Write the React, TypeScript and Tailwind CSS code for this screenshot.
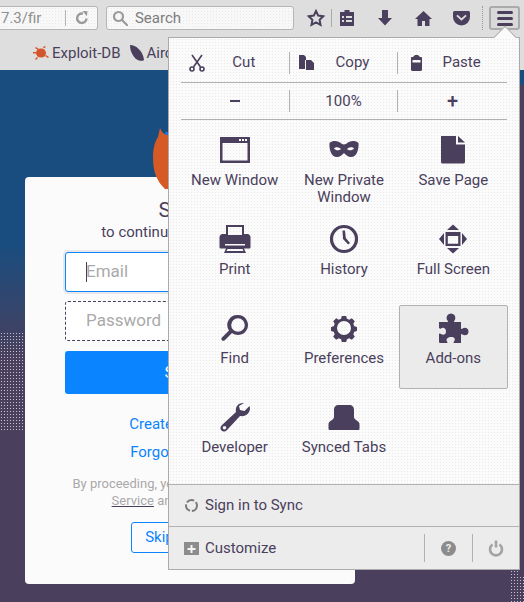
import React from "react";

const INK = "#4a3f5c";

function Svg({ w = 32, h = 32, children, className = "" }: { w?: number; h?: number; children: React.ReactNode; className?: string }) {
  return (
    <svg width={w} height={h} viewBox={`0 0 ${w} ${h}`} className={`block shrink-0 ${className}`} fill={INK}>
      {children}
    </svg>
  );
}

const icons: Record<string, React.ReactNode> = {
  window: (
    <Svg>
      <path fillRule="evenodd" d="M1 3h30v26H1zM3.500 9v17.500h25V9z" />
      <path fill="#fbfbfb" d="M20 5h2v2h-2zM23 5h2v2h-2zM26 5h2v2h-2z" />
    </Svg>
  ),
  mask: (
    <Svg>
      <path fillRule="evenodd" d="M1.500 9c3-2.500 6.500-2.500 9.500-1 2 1 3.500 2.500 5 2.500s3-1.500 5-2.500c3-1.500 6.500-1.500 9.500 1 .5 6-1.500 14-7.500 14-3 0-5-2-7-4-2 2-4 4-7 4-6 0-8-8-7.500-14zM6 14.500c1.500 2 5 2.500 7 .5-2-2-5.500-2.500-7-.5zm20 0c-1.500-2-5-1.500-7 .5 2 2 5.500 1.500 7-.5z" />
    </Svg>
  ),
  save: (
    <Svg>
      <path d="M4 2h15v8.500h9V28a1.500 1.500 0 0 1-1.500 1.500h-21A1.500 1.500 0 0 1 4 28z" />
      <path d="M21 2l7 6.500h-7z" />
    </Svg>
  ),
  print: (
    <Svg>
      <path fillRule="evenodd" d="M7 2h18v9h3.500c1.500 0 3 1.500 3 3v10c0 1-.5 1.500-1.500 1.500h-5L27 30H5l2-4.500H2c-1 0-1.500-.5-1.500-1.500V14c0-1.500 1.500-3 3-3H7zM9 4v8h14V4zM8.500 26 7.500 28h17l-1-2zM6 21v1.500h20V21z" />
    </Svg>
  ),
  history: (
    <Svg>
      <circle cx="16" cy="16" r="12.500" fill="none" stroke={INK} strokeWidth="3.200" />
      <path d="M14.500 7.500h2.500l.8 7.500 4.200 5-1.800 1.500-5.200-5.500z" />
    </Svg>
  ),
  fullscreen: (
    <Svg>
      <path d="M16 1.500l6 5.500H10zM16 30.500l-6-5.500h12zM2 16l5-6v12zM30 16l-5 6V10z" />
      <path fillRule="evenodd" d="M8.500 9h15v14h-15zM10.800 13v7.700h10.400V13z" />
    </Svg>
  ),
  find: (
    <Svg>
      <path fillRule="evenodd" d="M19 3a10 10 0 1 1-6 18l-7.500 7.500c-2 1-3.500-.5-3-2.500L10 18.500A10 10 0 0 1 19 3zm0 3.200a6.800 6.800 0 1 0 0 13.600 6.800 6.800 0 0 0 0-13.600z" />
    </Svg>
  ),
  gear: (
    <Svg>
      <path fillRule="evenodd" d="M13.800 4h4.400l.7 2.800 2.400 1 2.500-1.500 3 3-1.500 2.500 1 2.400 2.700.7v4.200l-2.700.7-1 2.400 1.500 2.500-3 3-2.500-1.500-2.400 1-.7 2.800h-4.400l-.7-2.800-2.400-1-2.500 1.500-3-3 1.500-2.500-1-2.400-2.700-.7v-4.200l2.700-.7 1-2.400-1.500-2.500 3-3 2.500 1.500 2.400-1zM16 9a7 7 0 1 0 0 14 7 7 0 0 0 0-14z" />
    </Svg>
  ),
  puzzle: (
    <Svg>
      <path d="M2 10h8c1 0 1.500-.5.500-1.500C9 7 9 2 14 1.500c5 .5 5 5.500 3.500 7-1 1-.5 1.500.5 1.500h6v6c0 1 .5 1.500 1.500.5 2-1.500 6-1 6 3s-4 4.500-6 3c-1-1-1.500-.5-1.500.5v8h-6.500c-1 0-1.500-.5-.5-1.500 1.500-2 1-4.500-2.500-4.500S8.500 27 10 29.500c1 1 .5 1.500-.5 1.500H3.500C2.500 31 2 30.500 2 29.500v-7c0-1 1-1.500 2-.5 2 1.500 5 1 5-2.500S6 15 4 16.500c-1 .5-2 0-2-1z" />
    </Svg>
  ),
  wrench: (
    <Svg>
      <path fillRule="evenodd" d="M24 2c-5 0-8 4-7 9L3 24c-2 2-2 4-.5 5.500S6 31 8 29l13-14c6 1 10-3 10-8l-.5-2-5 5-4.500-1-1-4 5-3zM5.500 25a1.800 1.800 0 1 1 0 3.600 1.800 1.800 0 0 1 0-3.600z" />
    </Svg>
  ),
  tabs: (
    <Svg>
      <path d="M11 4h10c3.500 0 5 2 5 5v7c0 3 5.500 4 5.500 7v4.500c0 1-.5 1.500-1.500 1.500H2c-1 0-1.500-.5-1.500-1.500V23c0-3 5.500-4 5.500-7V9c0-3 1.500-5 5-5z" />
    </Svg>
  ),
};

function Tile({ icon, label, active }: { icon: string; label: string; active?: boolean }) {
  return (
    <div className={`flex h-[84px] flex-col items-center rounded-[2px] border pt-[6px] text-center leading-[17px] ${active ? "border-[#b1b1b1] bg-[#ebebeb]" : "border-transparent"}`}>
      {icons[icon]}
      <span className="mt-[6px] max-w-[90px]">{label}</span>
    </div>
  );
}

const tiles = [
  ["window", "New Window"],
  ["mask", "New Private Window"],
  ["save", "Save Page"],
  ["print", "Print"],
  ["history", "History"],
  ["fullscreen", "Full Screen"],
  ["find", "Find"],
  ["gear", "Preferences"],
  ["puzzle", "Add-ons"],
  ["wrench", "Developer"],
  ["tabs", "Synced Tabs"],
];

const texture = "bg-[radial-gradient(#e9e9e9_0.7px,transparent_0.8px)] bg-[length:3px_3px]";

function EditCell({ icon, label, last }: { icon: React.ReactNode; label: string; last?: boolean }) {
  return (
    <div className={`flex h-[22px] items-center ${last ? "" : "border-r border-[#b1b1b1]"}`}>
      <span className="flex w-[24px] justify-end">{icon}</span>
      <span className="flex-1 pr-[6px] text-center">{label}</span>
    </div>
  );
}

function Toolbar() {
  return (
    <div className="flex h-[36px] items-center bg-[#dedede] pl-0 pr-[4px]">
      <div className={`flex h-[24px] w-[99px] items-center justify-end rounded-r-[3px] border border-l-0 border-[#b5b5b5] bg-[#f8f8f8] ${texture}`}>
        <span className="w-[41px] text-[15px] text-[#8f8f8f] overflow-hidden whitespace-nowrap">7.3/fir</span>
        <span className="mr-[8px] ml-[23px] flex h-[16px] w-[24px] items-center justify-end border-l border-[#b5b5b5] pl-[8px]">
          <svg width="14" height="14" viewBox="0 0 14 14" fill="none" stroke="#9a9a9a" strokeWidth="2.400">
            <path d="M11.500 7.500A4.700 4.700 0 1 1 8 2.700" />
            <path d="M7.500 0l5 .3-.6 5z" fill="#9a9a9a" stroke="none" />
          </svg>
        </span>
      </div>
      <div className={`ml-[8px] flex h-[24px] w-[190px] items-center rounded-[3px] border border-[#b5b5b5] bg-[#f8f8f8] pl-[5px] text-[15px] text-[#7d7d7d] ${texture}`}>
        <svg width="16" height="16" viewBox="0 0 16 16" fill="none" stroke="#9a9a9a" strokeWidth="2.200">
          <circle cx="6.500" cy="6.500" r="4.500" />
          <path d="M10 10l5 5" strokeLinecap="round" />
        </svg>
        <span className="ml-[7px]">Search</span>
      </div>
      <div className="ml-[13px] flex items-center">
        <svg width="18" height="18" viewBox="0 0 18 18" fill="none" stroke={INK} strokeWidth="2">
          <path d="M9 2l2.200 4.600 5 .7-3.600 3.500.9 5L9 13.400 4.500 15.800l.9-5L1.800 7.300l5-.7z" />
        </svg>
        <span className="ml-[6px] h-[18px] w-px bg-[#aaaaaa]" />
        <svg width="16" height="16" viewBox="0 0 16 16" fill={INK} className="ml-[7px]" fillRule="evenodd">
          <path d="M5.500 2V0h5v2H15v14H1V2zM3 6v2h2V6zm4 0v2h6V6zM3 10v2h2v-2zm4 0v2h6v-2z" />
        </svg>
        <svg width="16" height="16" viewBox="0 0 16 16" fill={INK} className="ml-[22px]">
          <path d="M5 0h6v8h4l-7 7.500L1 8h4z" />
        </svg>
        <svg width="17" height="17" viewBox="0 0 17 17" fill={INK} className="ml-[22px]">
          <path d="M8.500 1L17 9h-2.500v7H10v-5H7v5H2.500V9H0z" />
        </svg>
        <svg width="17" height="16" viewBox="0 0 17 16" fill={INK} className="ml-[21px]" fillRule="evenodd">
          <path d="M1.500 1h14A1.500 1.500 0 0 1 17 2.500V7a8.500 8.500 0 0 1-17 0V2.500A1.500 1.500 0 0 1 1.500 1zm1.800 5L8.500 10.800 13.700 6l-1.300-1.300-3.900 3.500-3.900-3.500z" />
        </svg>
        <span className="ml-[12px] h-[24px] w-0 border-l border-dotted border-[#9a9a9a]" />
        <div className="ml-[6px] flex h-[24px] w-[31px] flex-col items-center justify-center gap-[3px] rounded-[3px] border-2 border-[#ababab] bg-[#d9d9d9]">
          <span className="h-[3px] w-[16px] rounded-full bg-[#4a3f5c]" />
          <span className="h-[3px] w-[16px] rounded-full bg-[#4a3f5c]" />
          <span className="h-[3px] w-[16px] rounded-full bg-[#4a3f5c]" />
        </div>
      </div>
    </div>
  );
}

function Bookmarks() {
  return (
    <div className="flex h-[34px] items-center bg-[#dedede] pl-[33px] text-[15px] text-[#4a3f5c]">
      <svg width="16" height="14" viewBox="0 0 16 14" fill="#d4552a">
        <ellipse cx="8" cy="7" rx="5" ry="4.500" />
        <path d="M0 6h3v1.500H0zM13 9l3 2-1 1-3-2zM3 1l3 2-1 1-3-2zM10 1l2-1 .8 1-2 1.500zM4 11l-2 2 1 1 2-2z" />
      </svg>
      <span className="ml-[3px]">Exploit-DB</span>
      <svg width="16" height="18" viewBox="0 0 16 18" fill={INK} className="ml-[9px]">
        <path d="M1 1c6 0 13 6 14 15-1 1-3 1-5 .5C5 15 1 8 1 1z" />
      </svg>
      <span className="ml-[1px]">Aircrack-ng</span>
    </div>
  );
}

function Page() {
  return (
    <div className="relative flex-1 overflow-hidden bg-[linear-gradient(#1a4d7f_0px,#1a4d7f_175px,#4a3f5c_290px,#4a3f5c_100%)]">
      <div className="absolute left-0 top-[262px] h-[98px] w-[25px] bg-[radial-gradient(#c9c5cf_0.8px,transparent_0.9px)] bg-[length:3px_3px]" />
      <div className="absolute right-0 bottom-0 h-[32px] w-[14px] bg-[radial-gradient(#c9c5cf_0.8px,transparent_0.9px)] bg-[length:3px_3px]" />
      <div className="absolute right-0 top-[15px] h-[490px] w-[6px] bg-[#4a3f5c]" />
      <svg width="40" height="62" viewBox="0 0 40 62" className="absolute left-[153px] top-[57px] z-10">
        <path d="M7 1c1 3 3 5 6 7 8-2 20 0 27 8v46H12C4 54 0 46 0 30 0 22 2 14 5 10z" fill="#d55a26" />
        <path d="M12 5h4v3h-4z" fill="#1c74d6" />
      </svg>
      <div className="ml-[25px] mt-[107px] flex h-[407px] w-[330px] flex-col items-center rounded-[4px] bg-[#fbfbfc] pt-[21px] text-[#4a3f5c]">
        <h1 className="text-[21px] leading-[24px]">Sign in</h1>
        <p className="text-[15px] leading-[20px]">to continue to Firefox Sync</p>
        <div className="mt-[10px] flex h-[40px] w-[250px] items-center rounded-[3px] border border-[#0a84ff] bg-white pl-[20px] text-[17px] text-[#a9a9a9] shadow-[0_0_0_2px_#e8e8e8]">
          <span className="mr-[-1px] h-[20px] w-px bg-[#4a3f5c]" />
          Email
        </div>
        <div className="mt-[9px] flex h-[40px] w-[250px] items-center rounded-[3px] border border-dashed border-[#4a3f5c] bg-white pl-[20px] text-[17px] text-[#a9a9a9]">
          Password
        </div>
        <div className="mt-[10px] flex h-[43px] w-[250px] items-center justify-center rounded-[3px] bg-[#0a84ff] text-[17px] text-white">
          Sign in
        </div>
        <a className="mt-[20px] text-[15px] leading-[20px] text-[#0a84ff]">Create an account</a>
        <a className="mt-[8px] text-[15px] leading-[20px] text-[#0a84ff]">Forgot password?</a>
        <p className="mt-[13px] w-[260px] text-center text-[13px] leading-[17px] text-[#a9a9a9]">
          By proceeding, you agree to the Terms of <span className="underline decoration-[#4a3f5c]">Service</span> and Privacy Notice.
        </p>
        <div className="mt-[13px] flex h-[31px] items-center rounded-[3px] border border-[#0a84ff] px-[13px] text-[15px] text-[#0a84ff]">
          Skip this step
        </div>
      </div>
    </div>
  );
}

function Menu() {
  return (
    <div className="absolute left-[168px] top-[37px] z-20 flex h-[533px] w-[352px] flex-col border border-[#ababab] bg-[#fbfbfb] text-[15px] text-[#4a3f5c]">
      <div className="absolute -top-[9px] left-[328px] h-[16px] w-[16px] rotate-45 border-l border-t border-[#ababab] bg-[#fbfbfb]" />
      <div className={`relative flex flex-1 flex-col ${texture}`}>
        <div className="mx-[12px] grid h-[45px] grid-cols-3 items-center border-b border-[#b1b1b1] pt-[5px]">
          <EditCell
            label="Cut"
            icon={
              <svg width="16" height="18" viewBox="0 0 16 18" fill="none" stroke={INK} strokeWidth="1.600">
                <path d="M3 1l8.500 12M13 1L4.500 13" />
                <circle cx="3" cy="15" r="2" />
                <circle cx="13" cy="15" r="2" />
              </svg>
            }
          />
          <EditCell
            label="Copy"
            icon={
              <svg width="15" height="15" viewBox="0 0 15 15" fill={INK}>
                <path d="M0 0h5l2 2v3H6v9H0zM7 5h5l3 3v7H7z" />
              </svg>
            }
          />
          <EditCell
            label="Paste"
            last
            icon={
              <svg width="11" height="16" viewBox="0 0 11 16" fill={INK} fillRule="evenodd">
                <path d="M2 2l2-2h3l2 2h1c.6 0 1 .4 1 1v11.500c0 .8-.5 1.500-1.500 1.500h-8C.5 16 0 15.300 0 14.500V3c0-.6.4-1 1-1zm-.5 3v2.500h8V5z" />
              </svg>
            }
          />
        </div>
        <div className="mx-[12px] grid h-[37px] grid-cols-3 items-center border-b border-[#b1b1b1] text-center">
          <div className="flex h-[22px] items-center justify-center border-r border-[#b1b1b1]">
            <span className="h-[2px] w-[10px] bg-[#4a3f5c]" />
          </div>
          <div className="flex h-[22px] items-center justify-center border-r border-[#b1b1b1]">100%</div>
          <div className="flex h-[22px] items-center justify-center text-[20px] font-medium leading-none">+</div>
        </div>
        <div className="mx-[11px] mt-[7px] grid grid-cols-3 gap-y-[5px]">
          {tiles.map(([icon, label]) => (
            <Tile key={label} icon={icon} label={label} active={label === "Add-ons"} />
          ))}
        </div>
      </div>
      <div className="flex h-[42px] items-center border-t border-[#b1b1b1] bg-[#ececec] pl-[15px]">
        <svg width="15" height="15" viewBox="0 0 15 15" fill="none" stroke="#7a7a7a" strokeWidth="2" strokeDasharray="8 2">
          <circle cx="7.500" cy="7.500" r="5.500" />
        </svg>
        <span className="ml-[6px]">Sign in to Sync</span>
      </div>
      <div className="flex h-[43px] items-center border-t border-[#b1b1b1] bg-[#ececec] pl-[15px]">
        <svg width="15" height="15" viewBox="0 0 15 15">
          <path d="M0 1h15v13H0z" fill="#8c8c8c" />
          <path d="M6.500 4h2v3h3v2h-3v3h-2V9h-3V7h3z" fill="#f4f4f4" />
        </svg>
        <span className="ml-[6px]">Customize</span>
        <div className="ml-auto flex h-[28px] items-center">
          <div className="flex h-[28px] w-[48px] items-center justify-center border-l border-[#b1b1b1]">
            <span className="flex h-[15px] w-[15px] items-center justify-center rounded-full bg-[#8c8c8c] text-[11px] font-bold leading-none text-[#ececec]">?</span>
          </div>
          <div className="flex h-[28px] w-[47px] items-center justify-center border-l border-[#b1b1b1]">
            <svg width="16" height="17" viewBox="0 0 16 17" fill="none" stroke="#a3a3a3" strokeWidth="2.600">
              <path d="M4.500 4.500a6 6 0 1 0 7 0" />
              <path d="M8 0.500v7" />
            </svg>
          </div>
        </div>
      </div>
    </div>
  );
}

export default function App() {
  return (
    <div className="relative flex h-[602px] w-[524px] flex-col overflow-hidden font-['Roboto','Open_Sans',sans-serif]">
      <Toolbar />
      <Bookmarks />
      <Page />
      <Menu />
    </div>
  );
}
